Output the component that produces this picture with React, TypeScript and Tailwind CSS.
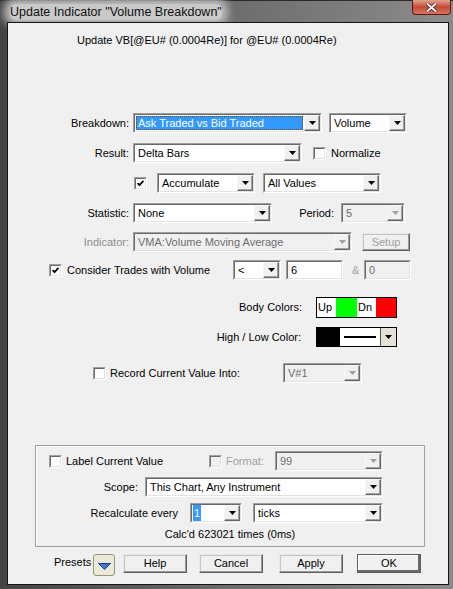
import type { ReactNode } from "react";

// Classic Win32 look: sunken field, raised arrow button, checkbox, push button.

function Arrow({ disabled }: { disabled?: boolean }) {
  return (
    <div className="flex h-full w-[16px] shrink-0 items-center justify-center border border-t-[#f8f8f8] border-l-[#f8f8f8] border-b-[#696969] border-r-[#696969] bg-[#f0f0f0] shadow-[inset_-1px_-1px_0_#a0a0a0]">
      <svg width="7" height="4" viewBox="0 0 7 4">
        <path d="M0 0h7L3.5 4z" fill={disabled ? "#a0a0a0" : "#000"} />
      </svg>
    </div>
  );
}

function Field({
  w,
  disabled,
  arrow = true,
  children,
}: {
  w: string;
  disabled?: boolean;
  arrow?: boolean;
  children?: ReactNode;
}) {
  return (
    <div className={`${w} h-[20px] shrink-0 border border-t-[#a0a0a0] border-l-[#a0a0a0] border-b-white border-r-white`}>
      <div
        className={`flex h-full border border-t-[#696969] border-l-[#696969] border-b-[#e3e3e3] border-r-[#e3e3e3] ${
          disabled ? "bg-[#f0f0f0] text-[#6d6d6d]" : "bg-white text-black"
        }`}
      >
        <div className="flex min-w-0 flex-1 items-center overflow-hidden whitespace-nowrap pl-[3px]">{children}</div>
        {arrow && <Arrow disabled={disabled} />}
      </div>
    </div>
  );
}

function Check({ checked, disabled }: { checked?: boolean; disabled?: boolean }) {
  return (
    <div className="flex size-[13px] shrink-0 items-center justify-center border border-t-[#a0a0a0] border-l-[#a0a0a0] border-b-white border-r-white">
      <div
        className={`flex size-full items-center justify-center border border-t-[#696969] border-l-[#696969] border-b-[#e3e3e3] border-r-[#e3e3e3] ${
          disabled ? "bg-[#f0f0f0]" : "bg-white"
        }`}
      >
        {checked && (
          <svg width="7" height="7" viewBox="0 0 7 7">
            <path d="M0.5 3l2 2.2L6.5 0.8" fill="none" stroke="#000" strokeWidth="1.8" />
          </svg>
        )}
      </div>
    </div>
  );
}

function Btn({ label, def, disabled, w = "w-[64px]", h = "h-[19px]" }: { label: string; def?: boolean; disabled?: boolean; w?: string; h?: string }) {
  return (
    <div
      className={`${w} ${h} flex shrink-0 items-center justify-center bg-[#f0f0f0] ${
        def
          ? "border border-[#5c5c5c] shadow-[inset_-2px_-2px_0_#6b6b6b,inset_1px_1px_0_#fff]"
          : "border border-t-[#e8e8e8] border-l-[#e8e8e8] border-b-[#5f5f5f] border-r-[#5f5f5f] shadow-[inset_-1px_-1px_0_#9a9a9a,inset_1px_1px_0_#c4c4c4]"
      } ${disabled ? "text-[#a0a0a0]" : "text-black"}`}
    >
      {label}
    </div>
  );
}

export default function App() {
  return (
    <div className="flex h-[589px] w-[453px] flex-col bg-gradient-to-r from-[#444] via-[#6c6c6c] to-[#8c8c8c] font-['Liberation_Sans',Arial,sans-serif] text-[11px] text-black">
      {/* title bar */}
      <div className="flex h-[22px] shrink-0 border-t border-[#2a2a2a]">
        <div className="flex items-center pl-[10px]">
          <span className="rounded-[6px] bg-[#c9c9c9] text-[12.5px] leading-[16px] text-[#111] shadow-[0_0_8px_6px_#bdbdbd]">
            Update Indicator "Volume Breakdown"
          </span>
        </div>
        <div className="ml-auto mr-[2px] flex h-[15px] w-[39px] items-center justify-center rounded-b-[4px] border border-t-0 border-[#5a1a14] bg-gradient-to-b from-[#e2a292] via-[#c24a36] to-[#d9735e] -mt-px">
          <svg width="11" height="9" viewBox="0 0 11 9">
            <path d="M1 0.5l9 8M10 0.5l-9 8" stroke="#3a0c08" strokeWidth="3.2" />
            <path d="M1 0.5l9 8M10 0.5l-9 8" stroke="#fff" strokeWidth="1.9" />
          </svg>
        </div>
      </div>

      {/* client area */}
      <div className="ml-[7px] mr-[4px] mb-[4px] flex flex-1 flex-col border border-[#151515] bg-[#f0f0f0]">
        <div className="ml-[69px] mt-[9px] h-[16px] leading-[16px]">Update VB[@EU# (0.0004Re)] for @EU# (0.0004Re)</div>

        {/* Breakdown */}
        <div className="mt-[65px] flex items-center">
          <div className="w-[121px] text-right">Breakdown:</div>
          <div className="ml-[4px]">
            <Field w="w-[189px]">
              <div className="-ml-[2px] mr-[1px] flex h-[14px] flex-1 items-center border border-dotted border-[#6b4a12] bg-[#3399ff] pl-[1px] text-white">
                Ask Traded vs Bid Traded
              </div>
            </Field>
          </div>
          <div className="ml-[7px]">
            <Field w="w-[78px]">Volume</Field>
          </div>
        </div>

        {/* Result */}
        <div className="mt-[10px] flex items-center">
          <div className="w-[121px] text-right">Result:</div>
          <div className="ml-[4px]">
            <Field w="w-[169px]">Delta Bars</Field>
          </div>
          <div className="ml-[11px]">
            <Check />
          </div>
          <div className="ml-[5px]">Normalize</div>
        </div>

        {/* Accumulate */}
        <div className="mt-[10px] flex items-center">
          <div className="ml-[126px]">
            <Check checked />
          </div>
          <div className="ml-[10px]">
            <Field w="w-[98px]">Accumulate</Field>
          </div>
          <div className="ml-[8px]">
            <Field w="w-[118px]">All Values</Field>
          </div>
        </div>

        {/* Statistic */}
        <div className="mt-[10px] flex items-center">
          <div className="w-[121px] text-right">Statistic:</div>
          <div className="ml-[4px]">
            <Field w="w-[139px]">None</Field>
          </div>
          <div className="w-[62px] text-right">Period:</div>
          <div className="ml-[7px]">
            <Field w="w-[64px]" disabled>
              5
            </Field>
          </div>
        </div>

        {/* Indicator */}
        <div className="mt-[9px] flex items-center">
          <div className="w-[121px] text-right text-[#8d8d8d]">Indicator:</div>
          <div className="ml-[4px]">
            <Field w="w-[219px]" disabled>
              VMA:Volume Moving Average
            </Field>
          </div>
          <div className="ml-[10px]">
            <Btn label="Setup" w="w-[48px]" h="h-[18px]" disabled />
          </div>
        </div>

        {/* Consider trades */}
        <div className="mt-[8px] flex items-center">
          <div className="ml-[41px] flex w-[184px] items-center">
            <Check checked />
            <span className="ml-[5px]">Consider Trades with Volume</span>
          </div>
          <Field w="w-[48px]">&lt;</Field>
          <div className="ml-[5px]">
            <Field w="w-[57px]" arrow={false}>
              6
            </Field>
          </div>
          <div className="ml-[9px] w-[12px] text-[#a0a0a0]">&amp;</div>
          <Field w="w-[47px]" arrow={false} disabled>
            0
          </Field>
        </div>

        {/* Body colors */}
        <div className="mt-[17px] flex items-center">
          <div className="w-[294px] text-right">Body Colors:</div>
          <div className="ml-[14px] flex h-[21px] w-[81px] border border-black">
            <div className="flex w-[19px] items-center bg-white pl-[1px]">Up</div>
            <div className="w-[21px] bg-[#00ff00]" />
            <div className="flex w-[19px] items-center bg-white pl-[1px]">Dn</div>
            <div className="flex-1 bg-[#ff0000]" />
          </div>
        </div>

        {/* High / Low */}
        <div className="mt-[9px] flex items-center">
          <div className="w-[293px] text-right">High / Low Color:</div>
          <div className="ml-[15px] flex h-[20px] w-[81px] border border-black">
            <div className="w-[23px] bg-black" />
            <div className="flex w-[40px] items-center justify-center bg-white">
              <div className="h-[2px] w-[32px] bg-black" />
            </div>
            <div className="flex flex-1 items-center justify-center border-l border-[#555] bg-[#e4e2d6]">
              <svg width="7" height="4" viewBox="0 0 7 4">
                <path d="M0 0h7L3.5 4z" fill="#000" />
              </svg>
            </div>
          </div>
        </div>

        {/* Record */}
        <div className="mt-[16px] flex items-center">
          <div className="ml-[85px]">
            <Check />
          </div>
          <div className="ml-[4px] w-[173px]">Record Current Value Into:</div>
          <Field w="w-[79px]" disabled>
            V#1
          </Field>
        </div>

        {/* Label / scope group */}
        <div className="ml-[27px] mt-[62px] flex w-[390px] flex-col border border-[#a0a0a0] pb-[5px] shadow-[inset_1px_1px_0_#fff]">
          <div className="mt-[5px] flex items-center">
            <div className="ml-[13px]">
              <Check />
            </div>
            <div className="ml-[4px] w-[143px]">Label Current Value</div>
            <Check disabled />
            <div className="ml-[4px] w-[49px] text-[#a0a0a0]">Format:</div>
            <Field w="w-[108px]" disabled>
              99
            </Field>
          </div>
          <div className="mt-[6px] flex items-center">
            <div className="w-[102px] text-right">Scope:</div>
            <div className="ml-[7px]">
              <Field w="w-[238px]">This Chart, Any Instrument</Field>
            </div>
          </div>
          <div className="mt-[6px] flex items-center">
            <div className="w-[142px] text-right">Recalculate every</div>
            <div className="ml-[12px]">
              <Field w="w-[52px]">
                <span className="-ml-[2px] bg-[#3399ff] px-[1px] text-white">1</span>
              </Field>
            </div>
            <div className="ml-[11px]">
              <Field w="w-[130px]">ticks</Field>
            </div>
          </div>
          <div className="mt-[4px] h-[14px] text-center leading-[14px]">Calc'd 623021 times (0ms)</div>
        </div>

        {/* buttons */}
        <div className="mt-[7px] flex items-start">
          <div className="ml-[46px] mt-[1px] w-[39px] leading-[14px]">Presets</div>
          <div className="flex size-[22px] items-center justify-center rounded-[3px] border border-[#9c9479] bg-[#ece9d8]">
            <svg width="13" height="7" viewBox="0 0 13 7" className="mt-[3px]">
              <path d="M0.5 0.5h12L6.5 6.5z" fill="#3b78d8" stroke="#1b3f80" strokeWidth="1" />
            </svg>
          </div>
          <div className="ml-[8px]">
            <Btn label="Help" />
          </div>
          <div className="ml-[12px]">
            <Btn label="Cancel" />
          </div>
          <div className="ml-[16px]">
            <Btn label="Apply" />
          </div>
          <div className="ml-[14px]">
            <Btn label="OK" def />
          </div>
        </div>
      </div>
    </div>
  );
}
